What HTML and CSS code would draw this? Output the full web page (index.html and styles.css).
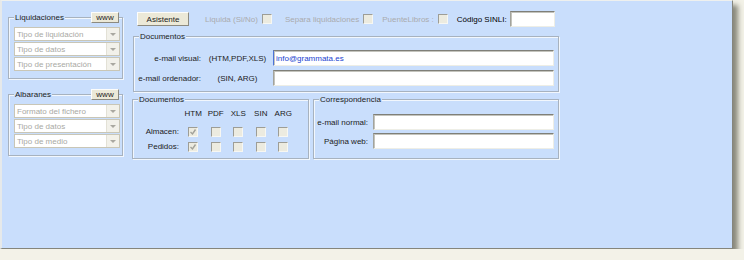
FILE: index.html
```html
<!DOCTYPE html>
<html lang="es">
<head>
    <meta charset="UTF-8">
    <title>Configuración SINLI</title>
    <link rel="stylesheet" href="styles.css">
</head>
<body>
    <div class="window">
        <div class="side">
            <div class="group">
                <div class="group-head">
                    <span class="legend">Liquidaciones</span>
                    <button class="btn btn-www">www</button>
                </div>
                <div class="combo"><span>Tipo de liquidación</span><i class="drop"></i></div>
                <div class="combo"><span>Tipo de datos</span><i class="drop"></i></div>
                <div class="combo"><span>Tipo de presentación</span><i class="drop"></i></div>
            </div>
            <div class="group group-alb">
                <div class="group-head">
                    <span class="legend">Albaranes</span>
                    <button class="btn btn-www">www</button>
                </div>
                <div class="combo"><span>Formato del fichero</span><i class="drop"></i></div>
                <div class="combo"><span>Tipo de datos</span><i class="drop"></i></div>
                <div class="combo"><span>Tipo de medio</span><i class="drop"></i></div>
            </div>
        </div>

        <div class="main">
            <div class="toolbar">
                <button class="btn btn-asist">Asistente</button>
                <span class="opt opt-first">Liquida (Si/No)</span><span class="chk"></span>
                <span class="opt">Separa liquidaciones</span><span class="chk"></span>
                <span class="opt opt-tight">PuenteLibros :</span><span class="chk"></span>
                <span class="sinli">Código SINLI:</span><input class="field field-sinli" type="text">
            </div>

            <div class="group docs">
                <div class="group-head"><span class="legend">Documentos</span></div>
                <div class="mail-grid">
                    <span class="lbl">e-mail visual:</span>
                    <span class="fmt">(HTM,PDF,XLS)</span>
                    <input class="field field-focus" type="text" value="info@grammata.es">
                    <span class="lbl">e-mail ordenador:</span>
                    <span class="fmt">(SIN, ARG)</span>
                    <input class="field" type="text">
                </div>
            </div>

            <div class="bottom">
                <div class="group formats">
                    <div class="group-head"><span class="legend">Documentos</span></div>
                    <div class="fmt-grid">
                        <span></span>
                        <span class="col">HTM</span>
                        <span class="col">PDF</span>
                        <span class="col">XLS</span>
                        <span class="col">SIN</span>
                        <span class="col">ARG</span>

                        <span class="lbl">Almacen:</span>
                        <span class="col"><span class="chk checked"><svg viewBox="0 0 8 8"><path d="M1.5 4l2 2 3-4.5"/></svg></span></span>
                        <span class="col"><span class="chk"></span></span>
                        <span class="col"><span class="chk"></span></span>
                        <span class="col"><span class="chk"></span></span>
                        <span class="col"><span class="chk"></span></span>

                        <span class="lbl">Pedidos:</span>
                        <span class="col"><span class="chk checked"><svg viewBox="0 0 8 8"><path d="M1.5 4l2 2 3-4.5"/></svg></span></span>
                        <span class="col"><span class="chk"></span></span>
                        <span class="col"><span class="chk"></span></span>
                        <span class="col"><span class="chk"></span></span>
                        <span class="col"><span class="chk"></span></span>
                    </div>
                </div>

                <div class="group corr">
                    <div class="group-head"><span class="legend">Correspondencia</span></div>
                    <div class="corr-grid">
                        <span class="lbl">e-mail normal:</span>
                        <input class="field" type="text">
                        <span class="lbl">Página web:</span>
                        <input class="field" type="text">
                    </div>
                </div>
            </div>
        </div>
    </div>
</body>
</html>
```

FILE: styles.css
```css
body {
    margin: 0;
    background-color: #f3f2e8; /* fondo beige de fuera */
    font-family: "Liberation Sans", Arial, sans-serif;
    font-size: 8px;
    color: #1b1b1b;
}
.window {
    width: 733px;
    height: 249px;
    box-sizing: border-box;
    background-color: #c9defc; /* azul claro */
    border: 1px solid;
    border-left-width: 2px;
    border-color: #eef0ee #85857c #85857c #e6e9ea;
    box-shadow: 5px 5px 5px rgba(80, 80, 66, 0.65);
    display: flex;
    align-items: flex-start;
}

/* group boxes */
.group {
    box-sizing: border-box;
    border: 1px solid #a7b2bf;
    box-shadow: inset 1px 1px 0 #f2f7fd, 1px 1px 0 #f2f7fd;
}
.group-head {
    display: flex;
    justify-content: space-between;
    align-items: center;
    height: 11px;
    margin-top: -6px;
}
.legend {
    background-color: #c9defc;
    padding: 0 1px;
    line-height: 11px;
}

/* buttons */
.btn {
    font-family: inherit;
    font-size: 8px;
    color: #1b1b1b;
    background-color: #ece9d8;
    border: 1px solid;
    border-color: #fdfdfb #8c8a80 #8c8a80 #fdfdfb;
    padding: 0;
    line-height: 9px;
}
.btn-www {
    width: 28px;
    height: 11px;
    margin-right: 2px;
}
.btn-asist {
    width: 52px;
    height: 14px;
}

/* left column */
.side {
    width: 115px;
    margin: 16px 0 0 6px;
}
.side .group {
    padding: 0 1px 6px 5px;
}
.side .legend {
    margin-left: 0;
}
.side .group-head {
    margin-bottom: 4px;
}
.group-alb {
    margin-top: 15px;
}
.combo {
    display: flex;
    align-items: center;
    box-sizing: border-box;
    width: 106px;
    height: 14px;
    margin-bottom: 1px;
    background-color: #fff;
    border: 1px solid #c9c6b6;
    color: #a9a9a4;
}
.combo span {
    flex: 1;
    padding-left: 2px;
}
.drop {
    position: relative;
    width: 12px;
    height: 12px;
    background-color: #f2f1ea;
    border-left: 1px solid #e3e1d6;
}
.drop::after {
    content: "";
    position: absolute;
    left: 3px;
    top: 5px;
    border-left: 3px solid transparent;
    border-right: 3px solid transparent;
    border-top: 3px solid #a9a8a0;
}

/* middle column */
.main {
    width: 427px;
    margin: 10px 0 0 9px;
}
.toolbar {
    display: flex;
    align-items: center;
    height: 16px;
    padding-left: 5px;
}
.opt {
    color: #a9abae;
    margin-left: 13px;
    margin-right: 4px;
}
.opt-first {
    margin-left: 16px;
}
.opt-tight {
    margin-left: 9px;
}
.sinli {
    margin-left: 9px;
    margin-right: 3px;
    color: #000;
}
.chk {
    display: inline-block;
    box-sizing: border-box;
    width: 10px;
    height: 10px;
    background-color: #ecebe0;
    border: 1px solid;
    border-color: #9d9d96 #f7f7f2 #f7f7f2 #9d9d96;
}
.chk svg {
    display: block;
    width: 8px;
    height: 8px;
    fill: none;
    stroke: #a2a29a;
    stroke-width: 1.4;
}
.field {
    box-sizing: border-box;
    height: 16px;
    margin: 0;
    padding: 0 2px;
    font-family: inherit;
    font-size: 8px;
    color: #1b1b1b;
    background-color: #fff;
    border: 1px solid;
    border-color: #7f7f78 #eeeee6 #eeeee6 #a3a39c;
    box-shadow: inset 1px 1px 0 #c4c4bd;
    outline: none;
}
.field-sinli {
    width: 45px;
}
.field-focus {
    color: #1a3fcf;
    border-left-color: #4d74d8;
}

.docs {
    margin: 9px 0 0 1px;
    width: 426px;
    padding: 0 4px 5px 0;
}
.docs .group-head,
.formats .group-head,
.corr .group-head {
    margin-left: 5px;
}
.docs .group-head {
    margin-bottom: 8px;
}
.mail-grid {
    display: grid;
    grid-template-columns: 68px 71px 281px;
    row-gap: 4px;
    align-items: center;
}
.lbl {
    text-align: right;
    padding-right: 1px;
}
.fmt {
    text-align: center;
}

.bottom {
    display: flex;
    gap: 4px;
    margin-top: 7px;
}
.formats {
    width: 177px;
    height: 60px;
}
.formats .group-head {
    margin-bottom: 4px;
}
.fmt-grid {
    display: grid;
    grid-template-columns: 49px repeat(5, 22.5px);
    grid-template-rows: 18px 15px 10px;
    align-items: start;
    line-height: 10px;
}
.fmt-grid .col {
    display: flex;
    justify-content: center;
    height: 10px;
}
.fmt-grid .lbl {
    padding-right: 3px;
}

.corr {
    width: 246px;
    height: 60px;
}
.corr .group-head {
    margin-bottom: 9px;
}
.corr-grid {
    display: grid;
    grid-template-columns: 55px 181px;
    column-gap: 4px;
    row-gap: 3px;
    align-items: center;
}
```
